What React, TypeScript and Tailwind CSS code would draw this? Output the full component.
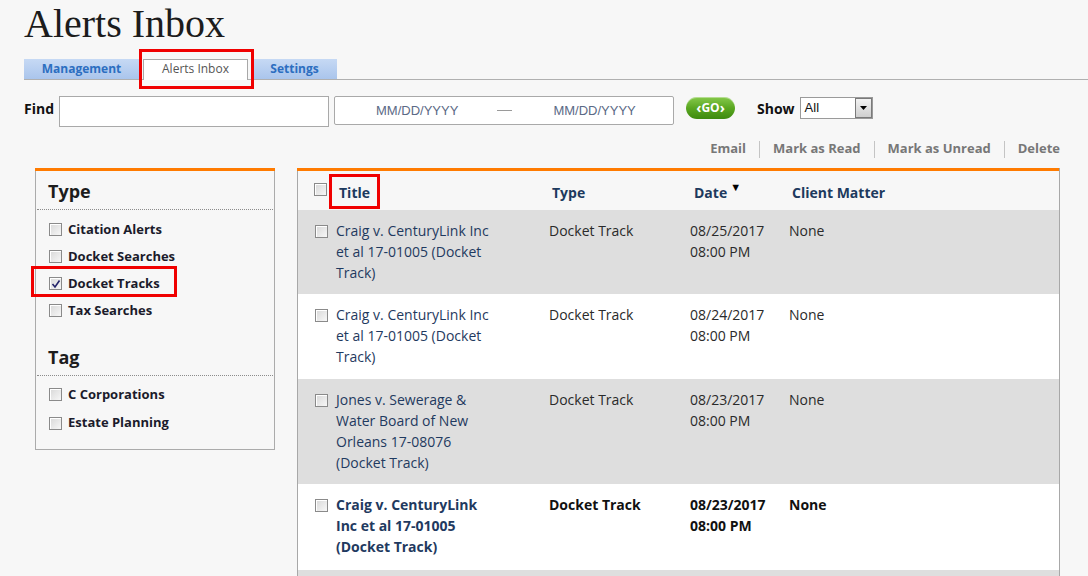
import React from "react";

const font = { fontFamily: '"Open Sans", "Liberation Sans", sans-serif' };

function Box({ checked = false }: { checked?: boolean }) {
  return (
    <span className="relative inline-block w-[13px] h-[13px] shrink-0 border border-[#8a8a8a] bg-gradient-to-br from-[#d8d8d8] to-[#f7f7f7] shadow-[inset_1px_1px_0_#fff]">
      {checked && (
        <svg className="absolute left-[1px] top-[1px]" width="10" height="10" viewBox="0 0 10 10">
          <path d="M1.5 5 L4 8 L8.5 1.5" fill="none" stroke="#24246a" strokeWidth="1.6" />
        </svg>
      )}
    </span>
  );
}

type Row = { title: string; date: string; bold?: boolean; gray: boolean; pb: string };

const rows: Row[] = [
  { title: "Craig v. CenturyLink Inc et al 17-01005 (Docket Track)", date: "08/25/2017", gray: true, pb: "pb-[11px]" },
  { title: "Craig v. CenturyLink Inc et al 17-01005 (Docket Track)", date: "08/24/2017", gray: false, pb: "pb-[12px]" },
  { title: "Jones v. Sewerage & Water Board of New Orleans 17-08076 (Docket Track)", date: "08/23/2017", gray: true, pb: "pb-[11px]" },
  { title: "Craig v. CenturyLink Inc et al 17-01005 (Docket Track)", date: "08/23/2017", bold: true, gray: false, pb: "pb-[13px]" },
];

function FilterItem({ label, checked = false }: { label: string; checked?: boolean }) {
  return (
    <div className="flex items-center h-[27px] pl-[13px]">
      <Box checked={checked} />
      <span className="ml-[6px] text-[13px] font-bold text-[#1b1b2b]">{label}</span>
    </div>
  );
}

export default function App() {
  return (
    <div className="relative w-[1088px] h-[576px] overflow-hidden bg-[#f7f7f7]" style={font}>
      {/* Title */}
      <div
        className="mt-[2px] ml-[24px] h-[44px] leading-[44px] text-[40px] text-[#1c1c1c]"
        style={{ fontFamily: '"Liberation Serif", "DejaVu Serif", serif' }}
      >
        Alerts Inbox
      </div>

      {/* Tabs */}
      <div className="mt-[13px] ml-[24px] flex items-end h-[21px] border-b border-[#b0b0b0]">
        <div className="w-[115px] h-[20px] flex items-center justify-center bg-gradient-to-b from-[#c6d9f4] to-[#aac5ec] text-[12px] font-bold text-[#2c6ec0]">
          Management
        </div>
        <div className="ml-[4px] w-[105px] h-[21px] -mb-px flex items-center justify-center pb-[2px] bg-white border border-b-0 border-[#a8a8a8] text-[12px] text-[#555]">
          Alerts Inbox
        </div>
        <div className="ml-[4px] w-[85px] h-[20px] flex items-center justify-center bg-gradient-to-b from-[#c6d9f4] to-[#aac5ec] text-[12px] font-bold text-[#2c6ec0]">
          Settings
        </div>
      </div>

      {/* Find row */}
      <div className="mt-[16px] flex items-start h-[31px]">
        <span className="ml-[24px] mt-[2px] text-[14px] font-bold text-[#111]">Find</span>
        <div className="ml-[5px] w-[270px] h-[31px] bg-white border border-[#a9a9a9]" />
        <div
          className="ml-[5px] w-[340px] h-[29px] bg-white border border-[#a9a9a9] rounded-[2px] flex items-center text-[13px] text-[#5b6a86]"
          style={{ fontFamily: '"Liberation Sans", Arial, sans-serif' }}
        >
          <span className="ml-[41px]">MM/DD/YYYY</span>
          <span className="ml-[39px] w-[15px] h-px bg-[#9a9a9a]" />
          <span className="ml-[41px]">MM/DD/YYYY</span>
        </div>
        <div className="ml-[12px] mt-[1px] w-[49px] h-[22px] rounded-full bg-gradient-to-b from-[#86c94a] via-[#5aa720] to-[#3d8a0e] flex items-center justify-center text-white text-[12px] font-bold shadow-[inset_0_1px_0_rgba(255,255,255,0.4)]">
          <span className="text-[14px] leading-none">‹</span>GO<span className="text-[14px] leading-none">›</span>
        </div>
        <span className="ml-[22px] mt-[2px] text-[14px] font-bold text-[#111]">Show</span>
        <div
          className="ml-[5px] mt-[1px] w-[73px] h-[22px] bg-white border border-[#9a9a9a] flex items-stretch"
          style={{ fontFamily: '"Liberation Sans", Arial, sans-serif' }}
        >
          <span className="flex-1 pl-[4px] text-[13px] leading-[20px] text-[#111]">All</span>
          <span className="w-[17px] border border-[#7a7a7a] bg-gradient-to-b from-[#f2f2f2] to-[#cfcfcf] flex items-center justify-center">
            <svg width="7" height="4" viewBox="0 0 7 4"><path d="M0 0 H7 L3.5 4 Z" fill="#000" /></svg>
          </span>
        </div>
      </div>

      {/* Actions */}
      <div className="mt-[12px] h-[20px] flex items-center justify-end pr-[28px] text-[13px] font-bold text-[#777]">
        <span>Email</span>
        <span className="mx-[13px] w-px h-[17px] bg-[#c4c4c4]" />
        <span>Mark as Read</span>
        <span className="mx-[13px] w-px h-[17px] bg-[#c4c4c4]" />
        <span>Mark as Unread</span>
        <span className="mx-[13px] w-px h-[17px] bg-[#c4c4c4]" />
        <span>Delete</span>
      </div>

      {/* Panels */}
      <div className="mt-[9px] flex items-start">
        {/* Left filter panel */}
        <div className="ml-[35px] w-[240px] h-[282px] border border-t-0 border-[#ababab] bg-[#f7f7f7]">
          <div className="h-[3px] -mx-px bg-[#ff7b00]" />
          <div className="h-[39px] flex items-center pl-[11px] pt-[2px] border-b border-dotted border-[#8c8c8c] mx-px">
            <span className="text-[18px] font-bold text-[#1d1d1d]">Type</span>
          </div>
          <div className="pt-[6px]">
            <FilterItem label="Citation Alerts" />
            <FilterItem label="Docket Searches" />
            <FilterItem label="Docket Tracks" checked />
            <FilterItem label="Tax Searches" />
          </div>
          <div className="mt-[13px] h-[39px] flex items-center pl-[11px] pt-[2px] border-b border-dotted border-[#8c8c8c] mx-px">
            <span className="text-[18px] font-bold text-[#1d1d1d]">Tag</span>
          </div>
          <div className="pt-[5px]">
            <div className="flex items-center h-[27px] pl-[13px]">
              <Box />
              <span className="ml-[6px] text-[13px] font-bold text-[#1b1b2b]">C Corporations</span>
            </div>
            <div className="flex items-center h-[28px] pl-[13px] mt-[1px]">
              <Box />
              <span className="ml-[6px] text-[13px] font-bold text-[#1b1b2b]">Estate Planning</span>
            </div>
          </div>
        </div>

        {/* Right results table */}
        <div className="ml-[22px] w-[763px] border-l border-r border-[#a8a8a8]">
          <div className="h-[3px] -ml-px bg-[#ff7b00]" />
          <div className="h-[39px] flex items-center pl-[16px] pt-[4px] bg-[#f7f7f7] text-[14px] font-bold text-[#1d3a5e]">
            <span className="-mt-[4px]"><Box /></span>
            <span className="ml-[12px] w-[213px]">Title</span>
            <span className="w-[142px]">Type</span>
            <span className="w-[98px] flex items-start">
              Date<span className="ml-[3px] -mt-[3px] text-[11px] text-black">▼</span>
            </span>
            <span>Client Matter</span>
          </div>
          {rows.map((r, i) => (
            <div
              key={i}
              className={`flex items-start pl-[17px] pt-[10px] ${r.pb} text-[14px] leading-[21px] ${
                r.gray ? "bg-[#dedede]" : "bg-white"
              } ${r.bold ? "font-bold" : ""}`}
            >
              <span className="mt-[2px]"><Box /></span>
              <div className="ml-[8px] w-[213px]">
                <div className="w-[158px] text-[#1f3a60]">{r.title}</div>
              </div>
              <div className={`w-[141px] ${r.bold ? "text-[#111]" : "text-[#2a2a2a]"}`}>Docket Track</div>
              <div className={`w-[99px] ${r.bold ? "text-[#111]" : "text-[#2a2a2a]"}`}>
                {r.date}
                <br />
                08:00 PM
              </div>
              <div className={r.bold ? "text-[#111]" : "text-[#2a2a2a]"}>None</div>
            </div>
          ))}
          <div className="h-[40px] bg-[#dedede]" />
        </div>
      </div>

      {/* Red annotation boxes */}
      <div className="absolute left-[139px] top-[49px] w-[115px] h-[40px] border-[3px] border-[#f00000]" />
      <div className="absolute left-[31px] top-[266px] w-[146px] h-[31px] border-[3px] border-[#f00000]" />
      <div className="absolute left-[329px] top-[174px] w-[51px] h-[35px] border-[3px] border-[#f00000]" />
    </div>
  );
}
